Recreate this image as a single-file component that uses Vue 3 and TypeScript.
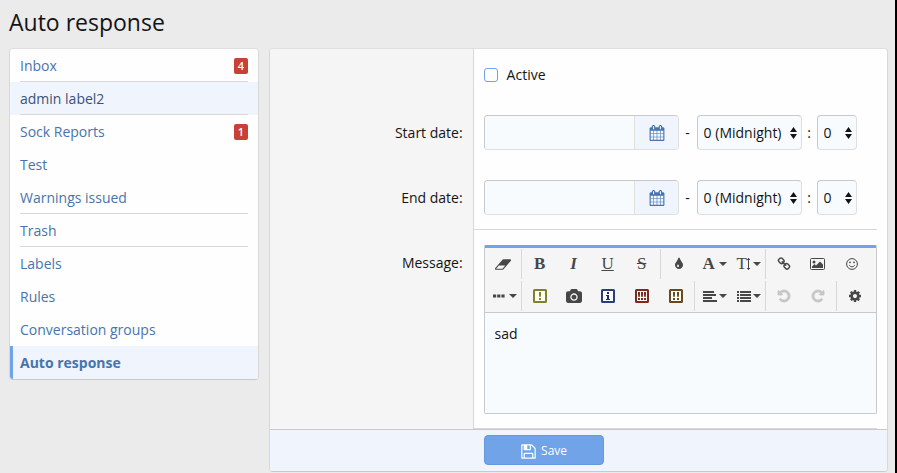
<script setup lang="ts">
import { ref } from 'vue'

interface NavItem {
  label: string
  count?: number
  divided?: boolean
  hovered?: boolean
  current?: boolean
}

interface Tool {
  id: string
  title: string
  text?: string
  menu?: boolean
  disabled?: boolean
}

const navItems: NavItem[] = [
  { label: 'Inbox', count: 4, divided: true },
  { label: 'admin label2', divided: true, hovered: true },
  { label: 'Sock Reports', count: 1 },
  { label: 'Test' },
  { label: 'Warnings issued', divided: true },
  { label: 'Trash', divided: true },
  { label: 'Labels' },
  { label: 'Rules' },
  { label: 'Conversation groups' },
  { label: 'Auto response', current: true },
]

const active = ref(false)
const message = ref('sad')

const dates = ref([
  { id: 'start', label: 'Start date:', value: '', hour: '0', minute: '0' },
  { id: 'end', label: 'End date:', value: '', hour: '0', minute: '0' },
])

const toolRows: Tool[][][] = [
  [
    [{ id: 'eraser', title: 'Remove formatting' }],
    [
      { id: 'bold', title: 'Bold', text: 'B' },
      { id: 'italic', title: 'Italic', text: 'I' },
      { id: 'underline', title: 'Underline', text: 'U' },
      { id: 'strike', title: 'Strikethrough', text: 'S' },
    ],
    [
      { id: 'tint', title: 'Text color' },
      { id: 'family', title: 'Font family', text: 'A', menu: true },
      { id: 'size', title: 'Font size', text: 'T', menu: true },
    ],
    [
      { id: 'link', title: 'Insert link' },
      { id: 'image', title: 'Insert image' },
      { id: 'smile', title: 'Smilies' },
    ],
  ],
  [
    [{ id: 'more', title: 'Insert', menu: true }],
    [
      { id: 'warn', title: 'Warning' },
      { id: 'camera', title: 'Gallery embed' },
      { id: 'info', title: 'Information' },
      { id: 'warn3', title: 'Severe warning' },
      { id: 'warn2', title: 'Strong warning' },
    ],
    [
      { id: 'align', title: 'Alignment', menu: true },
      { id: 'list', title: 'List', menu: true },
    ],
    [
      { id: 'undo', title: 'Undo', disabled: true },
      { id: 'redo', title: 'Redo', disabled: true },
    ],
    [{ id: 'cog', title: 'Toggle BB code' }],
  ],
]

const paths: Record<string, string> = {
  eraser:
    'M896 1408l336-384h-768l-336 384h768zm1013-1077q15 34 9.500 71.500t-30.500 65.500l-896 1024q-38 44-96 44h-768q-38 0-69.500-20.500t-47.500-54.500q-15-34-9.500-71.500t30.500-65.500l896-1024q38-44 96-44h768q38 0 69.500 20.500t47.500 54.500z',
  tint:
    'M896 1152q0-36-20-69-1-1-15.500-22.500t-25.500-38-25-44-21-50.500q-4-16-21-16t-21 16q-7 23-21 50.500t-25 44-25.500 38-15.500 22.500q-20 33-20 69 0 53 37.500 90.500t90.500 37.500 90.500-37.500 37.500-90.500zm512-128q0 212-150 362t-362 150-362-150-150-362q0-145 81-275 6-9 62.500-90.500t101-151 99.500-178 83-201.500q9-30 34-47t51-17 51.500 17 33.500 47q28 93 83 201.500t99.500 178 101 151 62.500 90.500q81 127 81 275z',
  link:
    'M1520 1216q0-40-28-68l-208-208q-28-28-68-28-42 0-72 32 3 3 19 18.500t21.500 21.500 15 19 13 25.500 3.500 27.500q0 40-28 68t-68 28q-15 0-27.500-3.500t-25.500-13-19-15-21.500-21.500-18.500-19q-33 31-33 73 0 40 28 68l206 207q27 27 68 27 40 0 68-26l147-146q28-28 28-67zm-703-705q0-40-28-68l-206-207q-28-28-68-28-39 0-68 27l-147 146q-28 28-28 67 0 40 28 68l208 208q27 27 68 27 42 0 72-31-3-3-19-18.500t-21.500-21.500-15-19-13-25.500-3.500-27.500q0-40 28-68t68-28q15 0 27.500 3.500t25.500 13 19 15 21.500 21.500 18.500 19q33-31 33-73zm895 705q0 120-85 203l-147 146q-83 83-203 83-121 0-204-85l-206-207q-83-83-83-203 0-123 88-209l-88-88q-86 88-208 88-120 0-204-84l-208-208q-84-84-84-204t85-203l147-146q83-83 203-83 121 0 204 85l206 207q83 83 83 203 0 123-88 209l88 88q86-88 208-88 120 0 204 84l208 208q84 84 84 204z',
  camera:
    'M960 672q119 0 203.500 84.500t84.500 203.500-84.500 203.500-203.500 84.500-203.500-84.500-84.500-203.500 84.500-203.500 203.500-84.500zm704-416q106 0 181 75t75 181v896q0 106-75 181t-181 75h-1408q-106 0-181-75t-75-181v-896q0-106 75-181t181-75h224l51-136q19-49 69.500-84.500t103.500-35.500h512q53 0 103.500 35.500t69.500 84.500l51 136h224zm-704 1152q185 0 316.500-131.500t131.500-316.500-131.500-316.500-316.500-131.500-316.500 131.500-131.500 316.500 131.500 316.500 316.500 131.500z',
  undo:
    'M1664 896q0 156-61 298t-164 245-245 164-298 61q-172 0-327-72.500t-264-204.500q-7-10-6.500-22.500t8.500-20.500l137-138q10-9 25-9 16 2 23 12 73 95 179 147t225 52q104 0 198.500-40.500t163.500-109.500 109.500-163.500 40.500-198.500-40.500-198.500-109.500-163.500-163.500-109.500-198.500-40.500q-98 0-188 35.500t-160 101.500l137 138q31 30 14 69-17 40-59 40h-448q-26 0-45-19t-19-45v-448q0-42 40-59 39-17 69 14l130 129q107-101 244.500-156.500t284.500-55.500q156 0 298 61t245 164 164 245 61 298z',
  cog:
    'M1152 896q0-106-75-181t-181-75-181 75-75 181 75 181 181 75 181-75 75-181zm512-109v222q0 12-8 23t-20 13l-185 28q-19 54-39 91 35 50 107 138 10 12 10 25t-9 23q-27 37-99 108t-94 71q-12 0-26-9l-138-108q-44 23-91 38-16 136-29 186-7 28-36 28h-222q-14 0-24.500-8.500t-11.500-21.500l-28-184q-49-16-90-37l-141 107q-10 9-25 9-14 0-25-11-126-114-165-168-7-10-7-23 0-12 8-23 15-21 51-66.500t54-70.500q-27-50-41-99l-183-27q-13-2-21-12.500t-8-23.500v-222q0-12 8-23t19-13l186-28q14-46 39-92-40-57-107-138-10-12-10-24 0-10 9-23 26-36 98.500-107.500t94.500-71.500q13 0 26 10l138 107q44-23 91-38 16-136 29-186 7-28 36-28h222q14 0 24.500 8.500t11.500 21.500l28 184q49 16 90 37l142-107q9-9 24-9 13 0 25 10 129 119 165 170 7 8 7 22 0 12-8 23-15 21-51 66.500t-54 70.500q26 50 41 98l183 28q13 2 21 12.500t8 23.500z',
}
paths.redo = paths.undo

const calendarPath =
  'M192 1664h288v-288h-288v288zm352 0h320v-288h-320v288zm-352-352h288v-320h-288v320zm352 0h320v-320h-320v320zm-352-384h288v-288h-288v288zm736 736h320v-288h-320v288zm-384-736h320v-288h-320v288zm768 736h288v-288h-288v288zm-384-352h320v-320h-320v320zm-352-864v-288q0-13-9.500-22.500t-22.500-9.500h-64q-13 0-22.500 9.500t-9.500 22.500v288q0 13 9.500 22.500t22.500 9.500h64q13 0 22.500-9.500t9.500-22.500zm736 864h288v-320h-288v320zm-384-384h320v-288h-320v288zm384 0h288v-288h-288v288zm32-480v-288q0-13-9.500-22.500t-22.500-9.500h-64q-13 0-22.500 9.500t-9.500 22.500v288q0 13 9.500 22.500t22.500 9.500h64q13 0 22.500-9.500t9.500-22.500zm384-64v1280q0 52-38 90t-90 38h-1408q-52 0-90-38t-38-90v-1280q0-52 38-90t90-38h128v-96q0-66 47-113t113-47h64q66 0 113 47t47 113v96h384v-96q0-66 47-113t113-47h64q66 0 113 47t47 113v96h128q52 0 90 38t38 90z'

const savePath =
  'M512 1536h768v-384h-768v384zm896 0h128v-896q0-14-10-38.500t-20-34.500l-281-281q-10-10-34-20t-39-10v416q0 40-28 68t-68 28h-576q-40 0-68-28t-28-68v-416h-128v1280h128v-416q0-40 28-68t68-28h832q40 0 68 28t28 68v416zm-384-928v-320q0-13-9.500-22.500t-22.500-9.500h-192q-13 0-22.500 9.500t-9.500 22.500v320q0 13 9.500 22.500t22.500 9.500h192q13 0 22.500-9.500t9.500-22.500zm640 32v928q0 40-28 68t-68 28h-1344q-40 0-68-28t-28-68v-1344q0-40 28-68t68-28h928q40 0 88 20t76 48l280 280q28 28 48 76t20 88z'

// Left edges of the exclamation marks inside each framed warning icon.
const marks: Record<string, number[]> = {
  warn: [6],
  warn2: [4, 8],
  warn3: [3, 6, 9],
}
</script>

<template>
  <div class="page">
    <h1 class="title">Auto response</h1>
    <div class="columns">
      <nav class="sidebar">
        <a
          v-for="item in navItems"
          :key="item.label"
          href="#"
          class="nav-link"
          :class="{ hovered: item.hovered, current: item.current }"
        >
          <span class="nav-inner" :class="{ divided: item.divided }">
            <span>{{ item.label }}</span>
            <span v-if="item.count" class="badge">{{ item.count }}</span>
          </span>
        </a>
      </nav>

      <form class="panel" @submit.prevent>
        <div class="row">
          <div class="label-cell"></div>
          <div class="field-cell">
            <label class="check">
              <input v-model="active" type="checkbox" />
              <span>Active</span>
            </label>
          </div>
        </div>

        <div v-for="date in dates" :key="date.id" class="row">
          <div class="label-cell">
            <label :for="date.id">{{ date.label }}</label>
          </div>
          <div class="field-cell date-fields">
            <div class="date-group">
              <input :id="date.id" v-model="date.value" type="text" />
              <button type="button" aria-label="Open calendar">
                <svg width="16" height="16" viewBox="0 0 1792 1792"><path :d="calendarPath" /></svg>
              </button>
            </div>
            <span class="joiner">-</span>
            <span class="select hour">
              <select v-model="date.hour" aria-label="Hour">
                <option value="0">0 (Midnight)</option>
              </select>
              <svg width="7" height="12" viewBox="0 0 7 12"><path d="M3.500 0L7 5H0zM3.500 12L7 7H0z" /></svg>
            </span>
            <span class="joiner colon">:</span>
            <span class="select minute">
              <select v-model="date.minute" aria-label="Minute">
                <option value="0">0</option>
              </select>
              <svg width="7" height="12" viewBox="0 0 7 12"><path d="M3.500 0L7 5H0zM3.500 12L7 7H0z" /></svg>
            </span>
          </div>
        </div>

        <div class="row">
          <div class="label-cell">
            <label for="message">Message:</label>
          </div>
          <div class="message-cell">
            <div class="editor">
              <div class="toolbar">
                <div v-for="(row, r) in toolRows" :key="r" class="tool-row">
                  <div v-for="(group, g) in row" :key="g" class="tool-group">
                    <button
                      v-for="tool in group"
                      :key="tool.id"
                      type="button"
                      class="tool"
                      :class="[tool.id, { menu: tool.menu }]"
                      :aria-label="tool.title"
                      :disabled="tool.disabled"
                    >
                      <span v-if="tool.text" class="letter">{{ tool.text }}</span>
                      <svg v-if="tool.id === 'size'" width="3" height="12" viewBox="0 0 3 12">
                        <path d="M1 0h1v1h1v1H2v8h1v1H2v1H1v-1H0v-1h1V2H0V1h1z" />
                      </svg>
                      <svg
                        v-else-if="paths[tool.id]"
                        class="glyph"
                        width="14"
                        height="14"
                        :viewBox="tool.id === 'eraser' || tool.id === 'camera' ? '0 0 1920 1792' : '0 0 1792 1792'"
                      >
                        <path :d="paths[tool.id]" />
                      </svg>
                      <svg v-else-if="tool.id === 'image'" width="15" height="12" viewBox="0 0 15 12">
                        <rect x="0.500" y="0.500" width="14" height="11" rx="1" fill="none" stroke="currentColor" />
                        <circle cx="4" cy="4" r="1.500" />
                        <path d="M2 10V8.500L4.500 6L6 7.500L10 3.500L13 6.500V10z" />
                      </svg>
                      <svg v-else-if="tool.id === 'smile'" width="12" height="12" viewBox="0 0 12 12">
                        <circle cx="6" cy="6" r="5.400" fill="none" stroke="currentColor" />
                        <circle cx="4" cy="4.300" r="0.900" />
                        <circle cx="8" cy="4.300" r="0.900" />
                        <path d="M3.200 7.200Q6 10.600 8.800 7.200" fill="none" stroke="currentColor" />
                      </svg>
                      <svg v-else-if="tool.id === 'more'" width="12" height="4" viewBox="0 0 12 4">
                        <path d="M0 0.500h3.200v3h-3.200zM4.200 0.500h3.200v3h-3.200zM8.400 0.500h3.200v3h-3.200z" />
                      </svg>
                      <svg v-else-if="tool.id === 'align'" width="14" height="11" viewBox="0 0 14 11">
                        <path d="M0 0h11v2H0zM0 3h13v2H0zM0 6h9v2H0zM0 9h14v2H0z" />
                      </svg>
                      <svg v-else-if="tool.id === 'list'" width="14" height="11" viewBox="0 0 14 11">
                        <path d="M0 0h2v2H0zM0 3h2v2H0zM0 6h2v2H0zM0 9h2v2H0zM3 0h11v2H3zM3 3h11v2H3zM3 6h11v2H3zM3 9h11v2H3z" />
                      </svg>
                      <svg v-else-if="tool.id === 'info'" width="14" height="14" viewBox="0 0 14 14">
                        <rect x="1" y="1" width="12" height="12" rx="0.500" fill="#fff" stroke="#2a3f78" stroke-width="2" />
                        <path d="M6 3h2v2H6zM5 6h3v4h1v1H5v-1h1V7H5z" fill="#1c2f63" />
                      </svg>
                      <svg v-else-if="marks[tool.id]" width="14" height="14" viewBox="0 0 14 14">
                        <rect x="1" y="1" width="12" height="12" rx="0.500" fill="#fffef4" stroke="currentColor" stroke-width="2" />
                        <path
                          v-for="x in marks[tool.id]"
                          :key="x"
                          :d="`M${x} 3h2v3l-.4 2h-1.200l-.4-2zM${x} 9h2v2h-2z`"
                        />
                      </svg>
                      <svg v-if="tool.menu" class="caret" width="8" height="4" viewBox="0 0 8 4">
                        <path d="M0 0h8L4 4z" />
                      </svg>
                    </button>
                  </div>
                </div>
              </div>
              <textarea id="message" v-model="message"></textarea>
            </div>
          </div>
        </div>

        <div class="footer">
          <div class="footer-actions">
            <button type="submit" class="save">
              <svg width="17" height="17" viewBox="0 0 1792 1792"><path :d="savePath" /></svg>
              Save
            </button>
          </div>
        </div>
      </form>
    </div>
  </div>
</template>

<style>
body {
  background: #ebebeb;
}
</style>

<style scoped>
.page,
.page * {
  box-sizing: border-box;
}

.page {
  min-height: 100vh;
  padding: 5px 7px 1px 9px;
  border-right: 2px solid #000;
  background: #ebebeb;
  color: #141414;
  font-family: 'Open Sans', 'Noto Sans', sans-serif;
  font-size: 14px;
  line-height: 20px;
}

button,
input,
select,
textarea {
  margin: 0;
  color: inherit;
  font: inherit;
}

svg {
  display: block;
  flex: none;
  fill: currentColor;
}

.title {
  margin: 0 0 9px;
  font-size: 23px;
  font-weight: 400;
  line-height: 34px;
}

.columns {
  display: flex;
  align-items: flex-start;
  gap: 10px;
}

.sidebar,
.panel {
  border: 1px solid #d8d8d8;
  border-top-color: #dfdfdf;
  border-bottom-color: #c9c9c9;
  border-radius: 4px;
  background: #fefefe;
  overflow: hidden;
}

.sidebar {
  flex: none;
  width: 250px;
}

.nav-link {
  display: block;
  padding: 0 10px;
  color: #4774ad;
  text-decoration: none;
}

.nav-inner {
  display: flex;
  align-items: center;
  justify-content: space-between;
  height: 33px;
  padding-top: 2px;
  border-bottom: 1px solid transparent;
}

.nav-inner.divided {
  border-bottom-color: #d8d8d8;
}

.nav-link.hovered {
  background: #f0f5fd;
  color: #3b5276;
}

.nav-link.current {
  padding-left: 7px;
  border-left: 3px solid #70a3e7;
  background: #f0f5fd;
  font-weight: 700;
}

.badge {
  padding: 0 4px;
  border-radius: 2px;
  background: #c84036;
  color: #fff;
  font-size: 11px;
  font-weight: 600;
  line-height: 16px;
}

.panel {
  flex: 1;
  min-width: 0;
}

.row {
  display: grid;
  grid-template-columns: 33% minmax(0, 1fr);
}

.label-cell {
  padding: 15px 10px 15px 15px;
  border-right: 1px solid #d8d8d8;
  background: #f5f5f5;
  line-height: 35px;
  text-align: right;
}

.field-cell {
  padding: 15px 10px;
}

.check {
  display: flex;
  align-items: center;
  gap: 9px;
  line-height: 21px;
}

.check input {
  width: 14px;
  height: 14px;
  border: 1px solid #70a3e7;
  border-radius: 3px;
  background: #fefefe;
  appearance: none;
}

.check input:checked {
  background: #70a3e7;
}

.date-fields {
  display: flex;
  align-items: center;
}

.date-group {
  display: flex;
  width: 195px;
  height: 35px;
  border: 1px solid #dfdfdf;
  border-top-color: #c9c9c9;
  border-left-color: #c9c9c9;
  border-radius: 4px;
  overflow: hidden;
}

.date-group input {
  flex: 1;
  min-width: 0;
  padding: 0 6px;
  border: 0;
  background: #f7fbfe;
}

.date-group button {
  display: grid;
  place-items: center;
  width: 44px;
  padding: 0 0 0 2px;
  border: 0;
  border-left: 1px solid #dfdfdf;
  background: #f0f5fd;
  color: #4774ad;
}

.joiner {
  width: 18px;
  text-align: center;
}

.joiner.colon {
  width: 15px;
}

.select {
  position: relative;
}

.select select {
  display: block;
  width: 100%;
  height: 35px;
  padding: 0 6px;
  border: 1px solid #dfdfdf;
  border-top-color: #c9c9c9;
  border-left-color: #c9c9c9;
  border-radius: 4px;
  background: #f7fbfe;
  appearance: none;
}

.select svg {
  position: absolute;
  top: 12px;
  right: 5px;
  pointer-events: none;
}

.hour {
  width: 105px;
}

.minute {
  width: 40px;
}

.message-cell {
  position: relative;
  padding: 15px 10px;
}

.editor {
  border: 1px solid #c9c9c9;
  border-top: 3px solid #70a3e7;
  border-radius: 2px;
}

.message-cell::before,
.message-cell::after {
  content: '';
  position: absolute;
  right: 10px;
  left: 0;
  height: 1px;
  background: #d8d8d8;
}

.message-cell::before {
  top: -1px;
}

.message-cell::after {
  bottom: 0;
}

.toolbar {
  border-bottom: 1px solid #c9c9c9;
  background: #f5f5f5;
}

.tool-row {
  display: flex;
  height: 32px;
  padding: 1px;
}

.tool-group {
  display: flex;
}

.tool-group + .tool-group {
  margin-left: 1px;
  padding-left: 1px;
  border-left: 1px solid #d8d8d8;
}

.tool {
  display: flex;
  align-items: center;
  justify-content: center;
  width: 34px;
  padding: 0;
  border: 0;
  background: none;
  color: #474747;
}

.tool.menu {
  justify-content: flex-start;
  padding: 0 3px 0 7px;
}

.caret {
  margin-left: auto;
}

.tool:disabled {
  color: #c6c6c6;
}

.letter {
  font-family: 'Liberation Serif', serif;
  font-size: 17px;
  font-weight: 700;
  line-height: 20px;
}

.italic .letter {
  font-style: italic;
}

.underline .letter,
.strike .letter,
.size .letter {
  font-weight: 400;
}

.underline .letter {
  text-decoration: underline;
}

.strike .letter {
  text-decoration: line-through;
}

.eraser .glyph,
.camera .glyph {
  width: 16px;
  height: 15px;
}

.undo .glyph,
.redo .glyph {
  stroke: currentColor;
  stroke-width: 110px;
}

.redo .glyph {
  transform: scaleX(-1);
}

.tool.warn {
  color: #80812e;
}

.tool.warn3 {
  color: #7a2b20;
}

.tool.warn2 {
  color: #6a4820;
}

textarea {
  display: block;
  width: 100%;
  height: 100px;
  padding: 11px 10px;
  border: 0;
  background: #f7fbfe;
  outline: none;
  resize: none;
}

.footer {
  display: grid;
  grid-template-columns: 33% minmax(0, 1fr);
  border-top: 1px solid #c9c9c9;
  background: #f0f5fd;
}

.footer-actions {
  grid-column: 2;
  padding: 5px 10px 6px;
}

.save {
  display: flex;
  align-items: center;
  justify-content: center;
  gap: 4px;
  width: 120px;
  height: 30px;
  padding: 2px 0 0;
  border: 1px solid #6599df;
  border-radius: 4px;
  background: #70a3e7;
  color: #fefefe;
  font-size: 12px;
}
</style>
